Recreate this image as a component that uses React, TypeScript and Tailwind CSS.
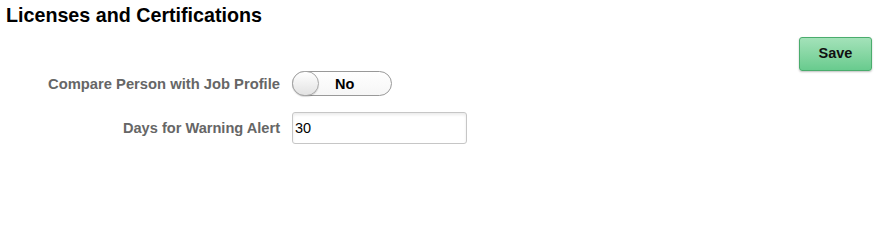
import React from "react";

export default function App() {
  return (
    <div className="w-[882px] h-[230px] bg-white font-['Liberation_Sans',Arial,sans-serif]">
      <div className="pt-[4px] pl-[6px] text-[19.7px] leading-[22px] font-bold text-black">
        Licenses and Certifications
      </div>
      <div className="flex justify-end pr-[10px] mt-[11px]">
        <button className="w-[73px] h-[34px] rounded-[3px] border border-[#4aac6d] bg-gradient-to-b from-[#a3e2b9] to-[#68cb8e] shadow-[0_1px_2px_rgba(0,0,0,0.25)] text-[14.5px] font-bold text-[#111]">
          Save
        </button>
      </div>
      <div className="grid grid-cols-[280px_auto] gap-x-[12px] gap-y-[16px] items-center">
        <div className="text-right text-[14.75px] font-bold text-[#666666] leading-[16px]">
          Compare Person with Job Profile
        </div>
        <div>
          <div className="relative w-[100px] h-[25px] rounded-full border border-[#999999] bg-gradient-to-b from-white to-[#f6f6f6] flex items-center">
            <div className="absolute left-[-1px] top-[-1px] w-[27px] h-[25px] rounded-full border border-[#a6a6a6] bg-gradient-to-b from-white to-[#e2e2e2] shadow-[0_1px_1px_rgba(0,0,0,0.15)]" />
            <span className="pl-[42px] text-[14.5px] font-bold text-black leading-[16px]">No</span>
          </div>
        </div>
        <div className="text-right text-[14.6px] font-bold text-[#666666] leading-[16px]">
          Days for Warning Alert
        </div>
        <div>
          <input
            defaultValue="30"
            className="w-[175px] h-[32px] rounded-[3px] border border-[#c6c6c6] shadow-[inset_0_2px_3px_rgba(0,0,0,0.08)] px-[2px] text-[14.5px] text-black outline-none font-['Liberation_Sans',Arial,sans-serif]"
          />
        </div>
      </div>
    </div>
  );
}
